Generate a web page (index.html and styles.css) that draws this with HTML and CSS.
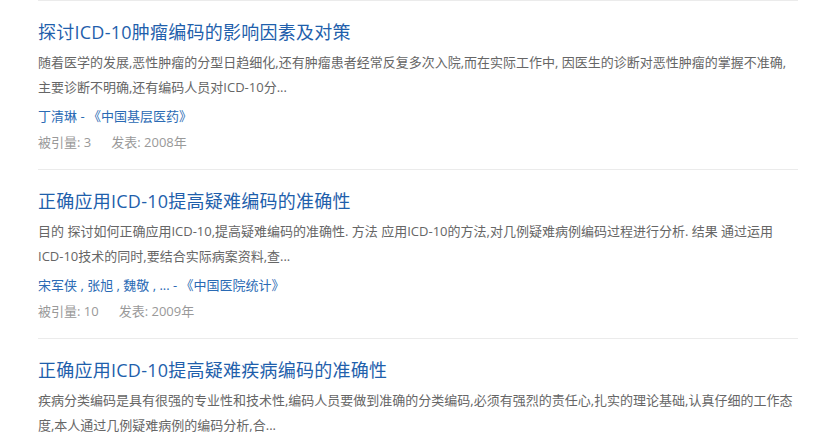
FILE: index.html
```html
<!DOCTYPE html>
<html lang="zh-CN">
<head>
<meta charset="utf-8">
<title>ICD-10 文献</title>
<link rel="stylesheet" href="styles.css">
</head>
<body>
<div class="list">
  <div class="item item-top"></div>
  <div class="item">
    <a class="title" href="#">探讨ICD-10肿瘤编码的影响因素及对策</a>
    <p class="abstract">随着医学的发展,恶性肿瘤的分型日趋细化,还有肿瘤患者经常反复多次入院,而在实际工作中, 因医生的诊断对恶性肿瘤的掌握不准确,主要诊断不明确,还有编码人员对ICD-10分...</p>
    <div class="authors"><a href="#">丁清琳</a> - <a href="#">《中国基层医药》</a></div>
    <div class="meta"><span class="cite">被引量: 3</span><span>发表: 2008年</span></div>
  </div>
  <div class="item">
    <a class="title" href="#">正确应用ICD-10提高疑难编码的准确性</a>
    <p class="abstract">目的 探讨如何正确应用ICD-10,提高疑难编码的准确性. 方法 应用ICD-10的方法,对几例疑难病例编码过程进行分析. 结果 通过运用<span class="code">ICD-10</span>技术的同时,要结合实际病案资料,查...</p>
    <div class="authors"><a href="#">宋军侠</a> , <a href="#">张旭</a> , <a href="#">魏敬</a> , ... - <a href="#">《中国医院统计》</a></div>
    <div class="meta"><span class="cite">被引量: 10</span><span>发表: 2009年</span></div>
  </div>
  <div class="item">
    <a class="title" href="#">正确应用ICD-10提高疑难疾病编码的准确性</a>
    <p class="abstract">疾病分类编码是具有很强的专业性和技术性,编码人员要做到准确的分类编码,必须有强烈的责任心,扎实的理论基础,认真仔细的工作态度,本人通过几例疑难病例的编码分析,合...</p>
  </div>
</div>
</body>
</html>
```
FILE: styles.css
```css
html, body {
  margin: 0;
  padding: 0;
  background: #fff;
}
body {
  font-family: "Open Sans", "Noto Sans CJK SC", sans-serif;
  overflow: hidden;
}
.list {
  margin: 0 17px 0 38px;
}
.item {
  padding: 17px 0 14px;
  border-bottom: 1px solid #ebebeb;
}
.item-top {
  padding: 0;
  height: 1px;
  border-bottom: 1px solid #ebebeb;
  margin-top: -1px;
}
.title {
  display: block;
  font-size: 18px;
  line-height: 28px;
  letter-spacing: 0.25px;
  color: #1f5fac;
  text-decoration: none;
  margin-bottom: 4px;
}
.abstract {
  margin: 0;
  font-size: 13px;
  line-height: 25px;
  color: #666;
}
.code {
  white-space: nowrap;
}
.authors {
  margin-top: 3px;
  font-size: 13px;
  line-height: 26px;
  color: #2a6ab4;
}
.authors a {
  color: #2a6ab4;
  text-decoration: none;
}
.meta {
  font-size: 13px;
  line-height: 26px;
  color: #999;
}
.cite {
  margin-right: 20px;
}
```
